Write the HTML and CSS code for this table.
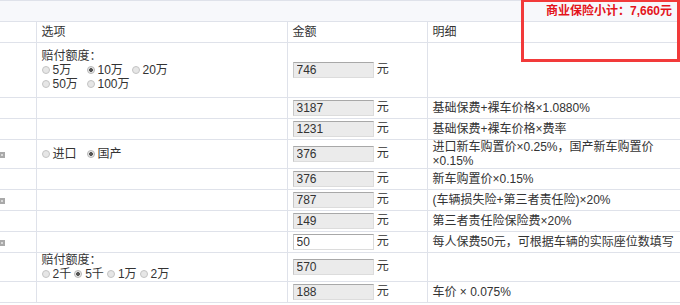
FILE: index.html
```html
<!DOCTYPE html>
<html lang="zh-CN">
<head>
<meta charset="utf-8">
<title>商业保险</title>
<link rel="stylesheet" href="styles.css">
</head>
<body>
<div class="wrap">
  <table class="ins">
    <colgroup><col class="c1"><col class="c2"><col class="c3"><col class="c4"></colgroup>
    <tr class="cut"><td></td><td></td><td></td><td></td></tr>
    <tr class="sub"><td colspan="4"><div class="total">商业保险小计：7,660元</div></td></tr>
    <tr class="r"><td></td><td>选项</td><td>金额</td><td>明细</td></tr>
    <tr class="big">
      <td></td>
      <td>
        <div>赔付额度：</div>
        <div><span class="opt"><i class="radio"></i>5万</span><span class="opt"><i class="radio on"></i>10万</span><span class="opt"><i class="radio"></i>20万</span></div>
        <div><span class="opt"><i class="radio"></i>50万</span><span class="opt"><i class="radio"></i>100万</span></div>
      </td>
      <td><input class="amt" value="746" readonly> 元</td>
      <td></td>
    </tr>
    <tr class="r"><td></td><td></td><td><input class="amt" value="3187" readonly> 元</td><td>基础保费+裸车价格×1.0880%</td></tr>
    <tr class="r"><td></td><td></td><td><input class="amt" value="1231" readonly> 元</td><td>基础保费+裸车价格×费率</td></tr>
    <tr class="mid">
      <td><i class="chk"></i></td>
      <td><span class="opt"><i class="radio"></i>进口</span><span class="opt"><i class="radio on"></i>国产</span></td>
      <td><input class="amt" value="376" readonly> 元</td>
      <td>进口新车购置价×0.25%，国产新车购置价×0.15%</td>
    </tr>
    <tr class="r"><td></td><td></td><td><input class="amt" value="376" readonly> 元</td><td>新车购置价×0.15%</td></tr>
    <tr class="r"><td><i class="chk"></i></td><td></td><td><input class="amt" value="787" readonly> 元</td><td>(车辆损失险+第三者责任险)×20%</td></tr>
    <tr class="r"><td></td><td></td><td><input class="amt" value="149" readonly> 元</td><td>第三者责任险保险费×20%</td></tr>
    <tr class="r"><td><i class="chk"></i></td><td></td><td><input class="amt edit" value="50"> 元</td><td>每人保费50元，可根据车辆的实际座位数填写</td></tr>
    <tr class="mid">
      <td></td>
      <td>
        <div>赔付额度：</div>
        <div><span class="opt tight"><i class="radio"></i>2千</span><span class="opt tight"><i class="radio on"></i>5千</span><span class="opt tight"><i class="radio"></i>1万</span><span class="opt tight"><i class="radio"></i>2万</span></div>
      </td>
      <td><input class="amt" value="570" readonly> 元</td>
      <td></td>
    </tr>
    <tr class="r"><td></td><td></td><td><input class="amt" value="188" readonly> 元</td><td>车价 × 0.075%</td></tr>
  </table>
  <div class="mark"></div>
</div>
</body>
</html>
```
FILE: styles.css
```css
html, body {
  margin: 0;
  padding: 0;
  background: #fff;
  overflow: hidden;
}
body {
  font-family: "Liberation Sans", "Noto Sans CJK SC", sans-serif;
  font-size: 12px;
  line-height: 14px;
  color: #333;
}
.wrap {
  position: relative;
  width: 680px;
  height: 305px;
  overflow: hidden;
}
.ins {
  border-collapse: collapse;
  table-layout: fixed;
  width: 690px;
}
.c1 { width: 36px; }
.c2 { width: 251px; }
.c3 { width: 140px; }
.c4 { width: 263px; }
.ins td {
  border: 1px solid #dfe2ea;
  padding: 0 5px;
  vertical-align: middle;
  white-space: normal;
}
.ins tr td:first-child { border-left: none; padding: 0; }
.ins .cut td { height: 0; padding: 0; border-top: none; font-size: 0; line-height: 0; }
.ins .sub td {
  height: 20px;
  background: #f7f8fb;
  padding: 0;
}
.total {
  width: 672px;
  text-align: right;
  color: #e4141b;
  font-weight: bold;
  white-space: nowrap;
}
.r td { height: 20px; }
.big td { height: 54px; }
.mid td { height: 28px; }
.opt {
  display: inline-block;
  width: 45px;
  white-space: nowrap;
}
.opt.tight { width: auto; margin-right: 3px; }
.radio {
  display: inline-block;
  width: 8px;
  height: 8px;
  box-sizing: border-box;
  border-radius: 50%;
  border: 1px solid #c4c4c4;
  background: #e6e6e6;
  margin-right: 3px;
}
.radio.on {
  background: radial-gradient(circle, #555 0 1.6px, #e6e6e6 2.2px);
  border-color: #b8b8b8;
}
.chk {
  display: inline-block;
  width: 5px;
  height: 6px;
  background: radial-gradient(circle at 2px 3px, #d8d8d8 0 1px, #a9a9a9 1.5px);
  vertical-align: middle;
}
.amt {
  width: 81px;
  height: 16px;
  box-sizing: border-box;
  margin: 0;
  padding: 0 3px;
  border: 1px solid #dcdcdc;
  border-top-color: #a8a8a8;
  border-left-color: #c8c8c8;
  background: #ebebeb;
  font-family: "Liberation Sans", "Noto Sans CJK SC", sans-serif;
  font-size: 12px;
  color: #333;
  vertical-align: middle;
  outline: none;
}
.amt.edit { background: #fff; }
.mark {
  position: absolute;
  left: 521px;
  top: 0;
  width: 159px;
  height: 62px;
  box-sizing: border-box;
  border: 3px solid #f23a3a;
  border-top-width: 2px;
  pointer-events: none;
}
```
